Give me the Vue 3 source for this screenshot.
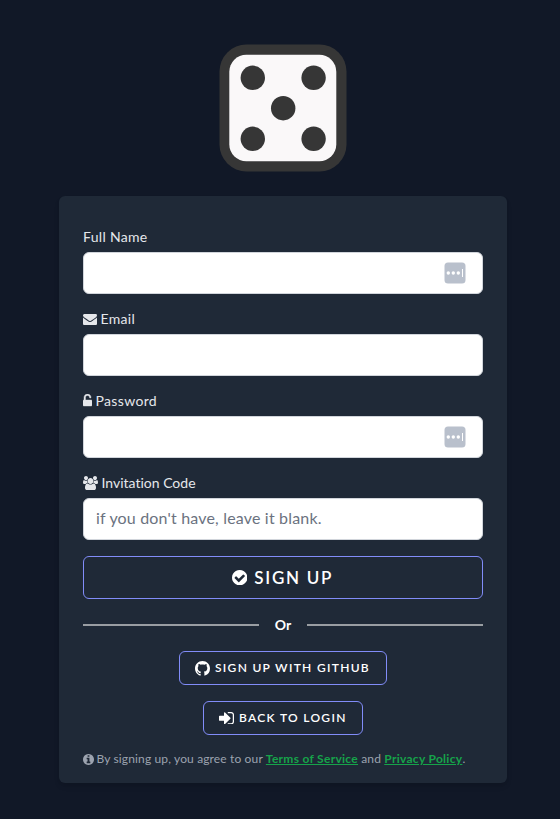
<script setup>
const fields = [
  { id: 'name', label: 'Full Name', manager: true, placeholder: '' },
  {
    id: 'email', label: 'Email', placeholder: '', box: '0 0 1792 1792', iconClass: 'wide',
    icon: 'M1792 710v794q0 66-47 113t-113 47h-1472q-66 0-113-47t-47-113v-794q44 49 101 87 362 246 497 345 57 42 92.5 65.5t94.5 48 110 24.5h2q51 0 110-24.5t94.5-48 92.5-65.5q170-123 498-345 57-39 100-87zm0-294q0 79-49 151t-122 123q-376 261-468 325-10 7-42.5 31t-54 38.5-52 32.5-57.5 27-50 9h-2q-23 0-50-9t-57.5-27-52-32.5-54-38.5-42.5-31q-91-64-262-182.5t-205-142.5q-62-42-117-115.5t-55-136.5q0-78 41.5-130t118.5-52h1472q65 0 112.5 47t47.5 113z',
  },
  {
    id: 'password', label: 'Password', manager: true, placeholder: '', box: '320 0 1152 1792', iconClass: 'narrow',
    icon: 'M1376 768q40 0 68 28t28 68v576q0 40-28 68t-68 28h-960q-40 0-68-28t-28-68v-576q0-40 28-68t68-28h32v-320q0-185 131.5-316.5t316.5-131.5 316.5 131.5 131.5 316.5q0 26-19 45t-45 19h-64q-26 0-45-19t-19-45q0-106-75-181t-181-75-181 75-75 181v320h736z',
  },
  {
    id: 'invite', label: 'Invitation Code', placeholder: "if you don't have, leave it blank.", box: '0 0 1920 1792', iconClass: 'group',
    icon: 'M593 896q-162 5-265 128h-134q-82 0-138-40.5t-56-118.5q0-353 124-353 6 0 43.5 21t97.5 42.5 119 21.5q67 0 133-23-5 37-5 66 0 139 81 256zm1071 637q0 120-73 189.5t-194 69.5h-874q-121 0-194-69.5t-73-189.5q0-53 3.5-103.5t14-109 26.5-108.5 43-97.5 62-81 85.5-53.5 111.5-20q10 0 43 21.5t73 48 107 48 135 21.5 135-21.5 107-48 73-48 43-21.5q61 0 111.5 20t85.5 53.5 62 81 43 97.5 26.5 108.5 14 109 3.5 103.5zm-1024-1277q0 106-75 181t-181 75-181-75-75-181 75-181 181-75 181 75 75 181zm704 384q0 159-112.5 271.5t-271.5 112.5-271.5-112.5-112.5-271.5 112.5-271.5 271.5-112.5 271.5 112.5 112.5 271.5zm576 225q0 78-56 118.5t-138 40.5h-134q-103-123-265-128 81-117 81-256 0-29-5-66 66 23 133 23 59 0 119-21.5t97.5-42.5 43.5-21q124 0 124 353zm-128-609q0 106-75 181t-181 75-181-75-75-181 75-181 181-75 181 75 75 181z',
  },
]
</script>

<template>
  <main class="page">
    <svg class="logo" viewBox="0 0 128 128" aria-hidden="true">
      <rect x="0.5" y="0.5" width="127" height="127" rx="27" fill="#363636" />
      <rect x="10.3" y="10.7" width="107" height="106.6" rx="17" fill="#faf8f9" />
      <g fill="#363636">
        <circle cx="33.8" cy="33.8" r="12.2" />
        <circle cx="94.6" cy="33.8" r="12.2" />
        <circle cx="64.2" cy="64.2" r="12.2" />
        <circle cx="33.8" cy="94.8" r="12.2" />
        <circle cx="94.6" cy="94.8" r="12.2" />
      </g>
    </svg>

    <form class="card" @submit.prevent>
      <div v-for="f in fields" :key="f.id" class="field">
        <label :for="f.id" class="label">
          <svg v-if="f.icon" class="label-icon" :class="f.iconClass" :viewBox="f.box"><path :d="f.icon" /></svg>
          <span :class="'text-' + f.id">{{ f.label }}</span>
        </label>
        <div class="control">
          <input :id="f.id" class="input" type="text" :placeholder="f.placeholder" />
          <svg v-if="f.manager" class="manager" viewBox="0 0 22 22">
            <rect x="0.5" y="0.5" width="21" height="21" rx="3.5" fill="#b9c0cc" />
            <g fill="#fff">
              <circle cx="4.3" cy="11" r="1.7" />
              <circle cx="9.3" cy="11" r="1.7" />
              <circle cx="14.3" cy="11" r="1.7" />
              <rect x="18" y="7" width="1" height="8" />
            </g>
          </svg>
        </div>
      </div>

      <button class="btn primary" type="submit">
        <svg class="check" viewBox="128 128 1536 1536"><path d="M1412 734q0-28-18-46l-91-90q-19-19-45-19t-45 19l-408 407-226-226q-19-19-45-19t-45 19l-91 90q-18 18-18 46 0 27 18 45l362 362q19 19 45 19 27 0 46-19l543-543q18-18 18-45zm252 162q0 209-103 385.5t-279.5 279.5-385.5 103-385.5-103-279.5-279.5-103-385.5 103-385.5 279.5-279.5 385.5-103 385.5 103 279.5 279.5 103 385.5z" /></svg>
        <span>SIGN UP</span>
      </button>

      <div class="divider"><span>Or</span></div>

      <div class="links">
        <button class="btn github" type="button">
          <svg class="mark" viewBox="0 0 16 16"><path d="M8 0C3.58 0 0 3.58 0 8c0 3.54 2.29 6.53 5.47 7.59.4.07.55-.17.55-.38 0-.19-.01-.82-.01-1.49-2.01.37-2.53-.49-2.69-.94-.09-.23-.48-.94-.82-1.13-.28-.15-.68-.52-.01-.53.63-.01 1.08.58 1.23.82.72 1.21 1.87.87 2.33.66.07-.52.28-.87.51-1.07-1.78-.2-3.64-.89-3.64-3.95 0-.87.31-1.59.82-2.15-.08-.2-.36-1.02.08-2.12 0 0 .67-.21 2.2.82.64-.18 1.32-.27 2-.27s1.36.09 2 .27c1.53-1.04 2.2-.82 2.2-.82.44 1.1.16 1.92.08 2.12.51.56.82 1.27.82 2.15 0 3.07-1.87 3.75-3.65 3.95.29.25.54.73.54 1.48 0 1.07-.01 1.93-.01 2.2 0 .21.15.46.55.38A8.01 8.01 0 0 0 16 8c0-4.42-3.58-8-8-8z" /></svg>
          <span>SIGN UP WITH GITHUB</span>
        </button>
        <button class="btn login" type="button">
          <svg class="enter" viewBox="128 256 1536 1280"><path d="M1312 896q0 26-19 45l-544 544q-19 19-45 19t-45-19-19-45v-288h-448q-26 0-45-19t-19-45v-384q0-26 19-45t45-19h448v-288q0-26 19-45t45-19 45 19l544 544q19 19 19 45zm352-352v704q0 119-84.5 203.5t-203.5 84.5h-320q-13 0-22.5-9.5t-9.5-22.5q0-4-1-20t-.5-26.5 3-23.5 10-19.5 20.5-6.5h320q66 0 113-47t47-113v-704q0-66-47-113t-113-47h-312l-11.5-1-11.5-3-8-5.5-7-9-2-13.5q0-4-1-20t-.5-26.5 3-23.5 10-19.5 20.5-6.5h320q119 0 203.5 84.5t84.5 203.5z" /></svg>
          <span>BACK TO LOGIN</span>
        </button>
      </div>

      <p class="terms">
        <svg class="info" viewBox="128 128 1536 1536"><path d="M1152 1376v-160q0-14-9-23t-23-9h-96v-512q0-14-9-23t-23-9h-320q-14 0-23 9t-9 23v160q0 14 9 23t23 9h96v320h-96q-14 0-23 9t-9 23v160q0 14 9 23t23 9h448q14 0 23-9t9-23zm-128-896v-160q0-14-9-23t-23-9h-192q-14 0-23 9t-9 23v160q0 14 9 23t23 9h192q14 0 23-9t9-23zm640 416q0 209-103 385.5t-279.5 279.5-385.5 103-385.5-103-279.5-279.5-103-385.5 103-385.5 279.5-279.5 385.5-103 385.5 103 279.5 279.5 103 385.5z" /></svg>
        <span>By signing up, you agree to our <a href="#">Terms of Service</a> and <a href="#">Privacy Policy</a>.</span>
      </p>
    </form>
  </main>
</template>

<style>
body { background: #111827; }
</style>

<style scoped>
* { box-sizing: border-box; }
svg { display: block; flex: none; fill: currentColor; }
.page {
  min-height: 819px;
  padding: 44px 53px 36px 59px;
  display: flex;
  flex-direction: column;
  align-items: center;
  background: #111827;
  font-family: Lato, "Open Sans", sans-serif;
  font-variant-ligatures: none;
}
.logo { width: 128px; height: 128px; margin-bottom: 24px; }
.card {
  width: 448px;
  height: 587px;
  padding: 31px 24px 0;
  border-radius: 6px;
  background: #1f2937;
  box-shadow: 0 4px 6px -1px rgba(0, 0, 0, .1), 0 2px 4px -1px rgba(0, 0, 0, .06);
}
.field { margin-bottom: 15px; }
.label {
  display: flex;
  align-items: center;
  gap: 3.5px;
  height: 20px;
  margin-bottom: 5px;
  color: #e5e7eb;
  font-size: 14px;
  line-height: 20px;
  white-space: nowrap;
}
.label-icon { height: 14px; }
.wide { width: 14px; }
.narrow { width: 9px; stroke: currentColor; stroke-width: 50; }
.group { width: 15px; }
.text-name { letter-spacing: .3px; }
.text-email { letter-spacing: .3px; }
.text-password { letter-spacing: .35px; }
.text-invite { letter-spacing: 0; }
.control { position: relative; }
.input {
  display: block;
  width: 100%;
  height: 42px;
  padding: 6px 12px 10px;
  border: 1px solid #d1d5db;
  border-radius: 6px;
  background: #fff;
  font: 16px/24px Lato, "Open Sans", sans-serif;
  letter-spacing: .18px;
}
.input::placeholder { color: #6b7280; opacity: 1; }
.manager { position: absolute; right: 17px; top: 10px; width: 22px; height: 22px; }
.btn {
  display: flex;
  align-items: center;
  justify-content: center;
  border: 1px solid #818cf8;
  border-radius: 6px;
  background: transparent;
  color: #fff;
  font-family: inherit;
  font-variant-ligatures: none;
  white-space: nowrap;
}
.btn span { padding-bottom: 2px; }
.primary { width: 400px; height: 43px; margin-top: 16px; padding: 0 1px 0 0; gap: 7px; font-size: 17px; font-weight: 600; letter-spacing: 1.7px; }
.primary span { padding-bottom: 1px; }
.check { width: 15.4px; height: 15.4px; }
.divider {
  display: flex;
  align-items: center;
  gap: 16px;
  height: 20px;
  margin: 16px 0;
  color: #fff;
  font-size: 14px;
  font-weight: 700;
}
.divider span { padding-bottom: 2px; }
.divider::before, .divider::after { content: ""; flex: 1; height: 2px; background: #999da2; }
.links { display: flex; flex-direction: column; align-items: center; gap: 16px; }
.github, .login { height: 34px; padding: 0 15px; gap: 5px; font-size: 12px; font-weight: 600; letter-spacing: 1.3px; justify-content: flex-start; }
.github { width: 208px; }
.login { width: 160px; }
.mark { width: 15px; height: 15px; }
.enter { width: 15px; height: 12.5px; }
.terms {
  display: flex;
  align-items: center;
  gap: 2.5px;
  height: 16px;
  margin: 16px 0 0;
  color: #9ca3af;
  font-size: 12px;
  line-height: 16px;
  letter-spacing: .14px;
  white-space: nowrap;
}
.info { width: 11px; height: 11px; }
.terms a { color: #16a34a; font-weight: 700; letter-spacing: .29px; text-decoration: underline; }
</style>
